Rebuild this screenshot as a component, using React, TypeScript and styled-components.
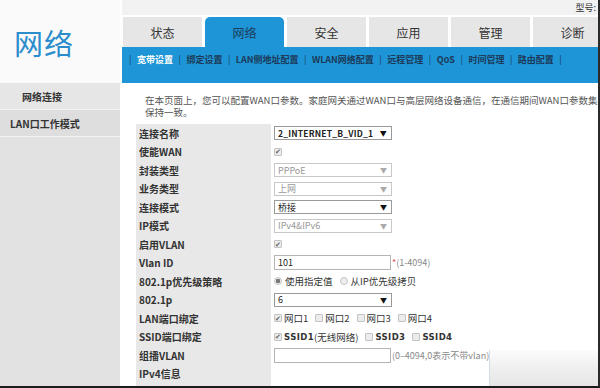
import React from 'react';
import styled, { createGlobalStyle } from 'styled-components';

const GlobalStyle = createGlobalStyle`
  html, body {
    margin: 0;
    padding: 0;
    background: #fff;
  }
  body {
    font-family: 'Noto Sans CJK SC', 'Liberation Sans', sans-serif;
    overflow: hidden;
  }
`;

const Page = styled.div`
  position: relative;
  width: 600px;
  height: 388px;
  box-sizing: border-box;
  display: flex;
  overflow: hidden;
  border-bottom: 2px solid #1c1c1c;
  border-right: 2px solid #2a2a2a;
  color: #333;
`;

const Sidebar = styled.div`
  width: 120px;
  flex-shrink: 0;
  display: flex;
  flex-direction: column;
  background: #e2e2e2;
`;

const LogoBox = styled.div`
  height: 83px;
  background: #fafafa;
  display: flex;
  align-items: center;
  padding-left: 14px;
  box-sizing: border-box;
  font-size: 29px;
  letter-spacing: 1px;
  color: #2b8dcc;
`;

const MenuItem = styled.div<{ active?: boolean; indent?: number }>`
  height: 26px;
  display: flex;
  align-items: center;
  padding-left: ${({ indent }) => indent ?? 10}px;
  font-size: 10px;
  font-weight: bold;
  color: #333;
  background: ${({ active }) => (active ? '#e6e6e6' : '#dedede')};
  border-bottom: 1px solid #f2f2f2;
`;

const Main = styled.div`
  flex: 1;
  min-width: 0;
  display: flex;
  flex-direction: column;
`;

const TopStrip = styled.div`
  height: 15px;
  margin-left: 2px;
  margin-bottom: 2px;
  background: #f2f2f2;
  display: flex;
  justify-content: flex-end;
  align-items: center;
  font-size: 9px;
  color: #333;
  padding-right: 2px;
`;

const Tabs = styled.div`
  height: 30px;
  display: flex;
  gap: 3px;
  padding-left: 3px;
`;

const Tab = styled.div<{ active?: boolean }>`
  width: 79px;
  flex-shrink: 0;
  display: flex;
  align-items: center;
  justify-content: center;
  font-size: 12px;
  color: ${({ active }) => (active ? '#1b3d5c' : '#333')};
  background: ${({ active }) => (active ? '#1e95d6' : '#e6e6e6')};
  border-radius: ${({ active }) => (active ? '5px 5px 0 0' : '0')};
`;

const SubNav = styled.div`
  height: 36px;
  margin-left: 2px;
  background: #1e95d6;
  display: flex;
  align-items: flex-start;
  padding: 6px 0 0 6px;
  box-sizing: border-box;
  gap: 4.5px;
  font-size: 9px;
  font-weight: bold;
  color: #1c3a58;
  white-space: nowrap;
`;

const SubLink = styled.span<{ current?: boolean }>`
  color: ${({ current }) => (current ? '#fff' : '#1c3a58')};
`;

const Sep = styled.span`
  color: #1c3a58;
  font-weight: normal;
  padding: 0 1px;
`;

const Content = styled.div`
  flex: 1;
  padding-left: 16px;
  overflow: hidden;
`;

const Intro = styled.div`
  padding: 11px 0 0 9px;
  font-size: 9.5px;
  color: #555;
  white-space: nowrap;
  overflow: hidden;
`;

const IntroLine = styled.div`
  height: 12px;
  line-height: 12px;
  overflow: hidden;
`;

const FormTable = styled.div`
  margin-top: 6px;
  display: grid;
  grid-template-columns: 135px 1fr;
  grid-auto-rows: 18.5px;
  background: linear-gradient(to right, #e8e8e8 135px, #fff 135px);
  height: 400px;
`;

const Label = styled.div`
  display: flex;
  align-items: center;
  padding-left: 3px;
  font-size: 10px;
  font-weight: bold;
  color: #333;
  white-space: nowrap;
`;

const Value = styled.div`
  display: flex;
  align-items: center;
  padding-left: 3px;
  gap: 4px;
  font-size: 9.5px;
  color: #333;
  white-space: nowrap;
`;

const Select = styled.div<{ disabled?: boolean; bold?: boolean }>`
  width: 118px;
  height: 14px;
  box-sizing: border-box;
  border: 1px solid ${({ disabled }) => (disabled ? '#c8c8c8' : '#9a9a9a')};
  display: flex;
  align-items: center;
  justify-content: space-between;
  gap: 3px;
  padding: 0 4px 0 3px;
  font-size: ${({ bold }) => (bold ? '8.5px' : '9px')};
  font-weight: ${({ bold }) => (bold ? 'bold' : 'normal')};
  letter-spacing: ${({ bold }) => (bold ? '0.2px' : '0')};
  color: ${({ disabled }) => (disabled ? '#999' : '#222')};
  overflow: hidden;
`;

const SelectText = styled.span`
  flex: 1;
  min-width: 0;
  overflow: hidden;
`;

const Arrow = styled.span<{ disabled?: boolean }>`
  flex-shrink: 0;
  font-size: 7px;
  color: ${({ disabled }) => (disabled ? '#aaa' : '#111')};
`;

const TextInput = styled.div`
  width: 117px;
  height: 15px;
  box-sizing: border-box;
  border: 1px solid #b4b4b4;
  display: flex;
  align-items: center;
  padding-left: 3px;
  font-size: 9px;
  color: #222;
`;

const Hint = styled.span`
  font-size: 9px;
  color: #888;
  margin-left: -3px;
`;

const Star = styled.span`
  color: #e05050;
`;

const Check = styled.span<{ checked?: boolean }>`
  width: 8px;
  height: 8px;
  box-sizing: border-box;
  border: 1px solid #c4c4c4;
  border-radius: 1px;
  background: #ececec;
  display: inline-flex;
  align-items: center;
  justify-content: center;
  font-size: 7px;
  line-height: 1;
  color: #666;
  margin-right: 2px;
  &::after {
    content: '${({ checked }) => (checked ? '✔' : '')}';
  }
`;

const Radio = styled.span<{ checked?: boolean }>`
  width: 8px;
  height: 8px;
  box-sizing: border-box;
  border-radius: 50%;
  border: 1px solid #c4c4c4;
  background: ${({ checked }) => (checked ? 'radial-gradient(circle, #777 0 2px, #eee 2.5px)' : '#eee')};
  margin-right: 3px;
`;

const Opt = styled.span`
  display: inline-flex;
  align-items: center;
  margin-right: 3px;
`;

const Latin = styled.span`
  font-family: 'DejaVu Sans', 'Liberation Sans', sans-serif;
  font-weight: bold;
  font-size: 8.5px;
  letter-spacing: 0.4px;
`;

const Smudge = styled.div`
  position: absolute;
  right: 0;
  bottom: 0;
  width: 108px;
  height: 36px;
  border-left: 1px solid #d3dbee;
  background: linear-gradient(to bottom, rgba(240, 240, 240, 0.2), #eeeeee 55%, #e6e6e6);
`;

const subLinks = ['宽带设置', '绑定设置', 'LAN侧地址配置', 'WLAN网络配置', '远程管理', 'QoS', '时间管理', '路由配置'];
const tabs = ['状态', '网络', '安全', '应用', '管理', '诊断'];

export default function App() {
  return (
    <>
      <GlobalStyle />
      <Page>
        <Sidebar>
          <LogoBox>网络</LogoBox>
          <MenuItem active indent={22}>网络连接</MenuItem>
          <MenuItem>LAN口工作模式</MenuItem>
        </Sidebar>
        <Main>
          <TopStrip>型号:</TopStrip>
          <Tabs>
            {tabs.map((t) => (
              <Tab key={t} active={t === '网络'}>
                {t}
              </Tab>
            ))}
          </Tabs>
          <SubNav>
            <Sep>|</Sep>
            {subLinks.map((s, i) => (
              <React.Fragment key={s}>
                <SubLink current={i === 0}>{s}</SubLink>
                <Sep>|</Sep>
              </React.Fragment>
            ))}
          </SubNav>
          <Content>
            <Intro>
              <IntroLine>
                在本页面上，您可以配置WAN口参数。家庭网关通过WAN口与高层网络设备通信，在通信期间WAN口参数集必
              </IntroLine>
              <IntroLine>保持一致。</IntroLine>
            </Intro>
            <FormTable>
              <Label>连接名称</Label>
              <Value>
                <Select bold>
                  <SelectText>2_INTERNET_B_VID_1</SelectText>
                  <Arrow>▼</Arrow>
                </Select>
              </Value>

              <Label>使能WAN</Label>
              <Value>
                <Check checked />
              </Value>

              <Label>封装类型</Label>
              <Value>
                <Select disabled>
                  <SelectText>PPPoE</SelectText>
                  <Arrow disabled>▼</Arrow>
                </Select>
              </Value>

              <Label>业务类型</Label>
              <Value>
                <Select disabled>
                  <SelectText>上网</SelectText>
                  <Arrow disabled>▼</Arrow>
                </Select>
              </Value>

              <Label>连接模式</Label>
              <Value>
                <Select>
                  <SelectText>桥接</SelectText>
                  <Arrow>▼</Arrow>
                </Select>
              </Value>

              <Label>IP模式</Label>
              <Value>
                <Select disabled>
                  <SelectText>IPv4&amp;IPv6</SelectText>
                  <Arrow disabled>▼</Arrow>
                </Select>
              </Value>

              <Label>启用VLAN</Label>
              <Value>
                <Check checked />
              </Value>

              <Label>Vlan ID</Label>
              <Value>
                <TextInput>101</TextInput>
                <Hint>
                  <Star>*</Star>(1-4094)
                </Hint>
              </Value>

              <Label>802.1p优先级策略</Label>
              <Value>
                <Opt>
                  <Radio checked />
                  使用指定值
                </Opt>
                <Opt>
                  <Radio />
                  从IP优先级拷贝
                </Opt>
              </Value>

              <Label>802.1p</Label>
              <Value>
                <Select>
                  <SelectText>6</SelectText>
                  <Arrow>▼</Arrow>
                </Select>
              </Value>

              <Label>LAN端口绑定</Label>
              <Value>
                <Opt>
                  <Check checked />
                  网口1
                </Opt>
                <Opt>
                  <Check />
                  网口2
                </Opt>
                <Opt>
                  <Check />
                  网口3
                </Opt>
                <Opt>
                  <Check />
                  网口4
                </Opt>
              </Value>

              <Label>SSID端口绑定</Label>
              <Value>
                <Opt>
                  <Check checked />
                  <Latin>SSID1</Latin>(无线网络)
                </Opt>
                <Opt>
                  <Check />
                  <Latin>SSID3</Latin>
                </Opt>
                <Opt>
                  <Check />
                  <Latin>SSID4</Latin>
                </Opt>
              </Value>

              <Label>组播VLAN</Label>
              <Value>
                <TextInput />
                <Hint>(0–4094,0表示不带vlan)</Hint>
              </Value>

              <Label>IPv4信息</Label>
              <Value />
            </FormTable>
          </Content>
        </Main>
        <Smudge />
      </Page>
    </>
  );
}
